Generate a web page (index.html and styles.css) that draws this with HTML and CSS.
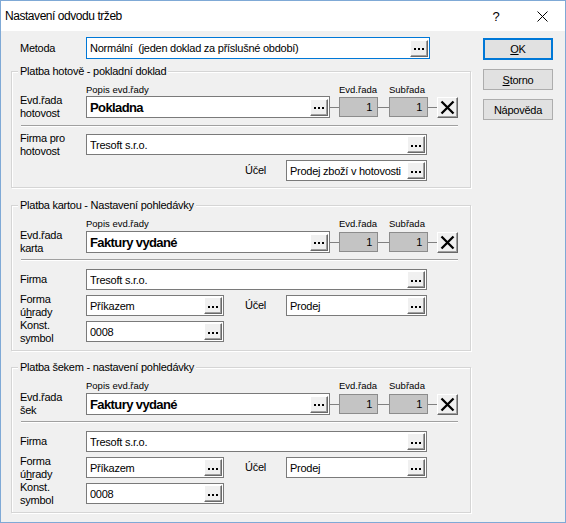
FILE: index.html
```html
<!DOCTYPE html>
<html lang="cs">
<head>
<meta charset="utf-8">
<title>Nastavení odvodu tržeb</title>
<link rel="stylesheet" href="styles.css">
</head>
<body>
<div class="window">
  <div class="titlebar">
    <span class="title">Nastavení odvodu tržeb</span>
    <span class="tb-btn help">?</span>
    <span class="tb-btn"><svg width="11" height="11" viewBox="0 0 11 11"><path d="M0.5 0.5 L10.5 10.5 M10.5 0.5 L0.5 10.5" stroke="#000" stroke-width="1" fill="none"/></svg></span>
  </div>
  <div class="client">
    <div class="main">
      <div class="row metoda-row">
        <span class="lbl">Metoda</span>
        <div class="edit focus w-metoda"><span class="val">Normální  (jeden doklad za příslušné období)</span><span class="ell"><i></i></span></div>
      </div>

      <div class="group g1">
        <div class="legend">Platba hotově - pokladní doklad</div>
        <div class="caprow"><span class="cap c-popis">Popis evd.řady</span><span class="cap c-evd">Evd.řada</span><span class="cap">Subřada</span></div>
        <div class="row evdrow">
          <span class="lbl">Evd.řada<br>hotovost</span>
          <div class="edit w-evd bold"><span class="val">Pokladna</span><span class="ell"><i></i></span></div>
          <span class="link"></span>
          <div class="num">1</div>
          <span class="link l2"></span>
          <div class="num">1</div>
          <span class="link"></span>
          <div class="xbtn"><svg width="15" height="15" viewBox="0 0 15 15"><path d="M1.5 1.5 L13.5 13.5 M13.5 1.5 L1.5 13.5" stroke="#000" stroke-width="2.3" fill="none"/></svg></div>
        </div>
        <div class="sep"></div>
        <div class="row frow r-firma">
          <span class="lbl">Firma pro<br>hotovost</span>
          <div class="edit w-wide"><span class="val">Tresoft s.r.o.</span><span class="ell"><i></i></span></div>
        </div>
        <div class="row frow r-next">
          <span class="lbl ucel solo">Účel</span>
          <div class="edit w-ucel"><span class="val">Prodej zboží v hotovosti</span><span class="ell"><i></i></span></div>
        </div>
      </div>

      <div class="group g2">
        <div class="legend">Platba kartou - Nastavení pohledávky</div>
        <div class="caprow"><span class="cap c-popis">Popis evd.řady</span><span class="cap c-evd">Evd.řada</span><span class="cap">Subřada</span></div>
        <div class="row evdrow">
          <span class="lbl">Evd.řada<br>karta</span>
          <div class="edit w-evd bold"><span class="val">Faktury vydané</span><span class="ell"><i></i></span></div>
          <span class="link"></span>
          <div class="num">1</div>
          <span class="link l2"></span>
          <div class="num">1</div>
          <span class="link"></span>
          <div class="xbtn"><svg width="15" height="15" viewBox="0 0 15 15"><path d="M1.5 1.5 L13.5 13.5 M13.5 1.5 L1.5 13.5" stroke="#000" stroke-width="2.3" fill="none"/></svg></div>
        </div>
        <div class="sep"></div>
        <div class="row frow r-firma">
          <span class="lbl">Firma</span>
          <div class="edit w-wide"><span class="val">Tresoft s.r.o.</span><span class="ell"><i></i></span></div>
        </div>
        <div class="row frow r-next">
          <span class="lbl">Forma<br>ú<u>h</u>rady</span>
          <div class="edit w-short"><span class="val">Příkazem</span><span class="ell"><i></i></span></div>
          <span class="lbl ucel">Účel</span>
          <div class="edit w-ucel"><span class="val">Prodej</span><span class="ell"><i></i></span></div>
        </div>
        <div class="row frow r-next">
          <span class="lbl">Konst.<br>symbol</span>
          <div class="edit w-short"><span class="val">0008</span><span class="ell"><i></i></span></div>
        </div>
      </div>

      <div class="group g3">
        <div class="legend">Platba šekem - nastavení pohledávky</div>
        <div class="caprow"><span class="cap c-popis">Popis evd.řady</span><span class="cap c-evd">Evd.řada</span><span class="cap">Subřada</span></div>
        <div class="row evdrow">
          <span class="lbl">Evd.řada<br>šek</span>
          <div class="edit w-evd bold"><span class="val">Faktury vydané</span><span class="ell"><i></i></span></div>
          <span class="link"></span>
          <div class="num">1</div>
          <span class="link l2"></span>
          <div class="num">1</div>
          <span class="link"></span>
          <div class="xbtn"><svg width="15" height="15" viewBox="0 0 15 15"><path d="M1.5 1.5 L13.5 13.5 M13.5 1.5 L1.5 13.5" stroke="#000" stroke-width="2.3" fill="none"/></svg></div>
        </div>
        <div class="sep"></div>
        <div class="row frow r-firma">
          <span class="lbl">Firma</span>
          <div class="edit w-wide"><span class="val">Tresoft s.r.o.</span><span class="ell"><i></i></span></div>
        </div>
        <div class="row frow r-next">
          <span class="lbl">Forma<br>ú<u>h</u>rady</span>
          <div class="edit w-short"><span class="val">Příkazem</span><span class="ell"><i></i></span></div>
          <span class="lbl ucel">Účel</span>
          <div class="edit w-ucel"><span class="val">Prodej</span><span class="ell"><i></i></span></div>
        </div>
        <div class="row frow r-next">
          <span class="lbl">Konst.<br>symbol</span>
          <div class="edit w-short"><span class="val">0008</span><span class="ell"><i></i></span></div>
        </div>
      </div>
    </div>

    <div class="buttons">
      <div class="btn default"><u>O</u>K</div>
      <div class="btn"><u>S</u>torno</div>
      <div class="btn">Nápověda</div>
    </div>
  </div>
</div>
</body>
</html>
```

FILE: styles.css
```css
* { box-sizing: border-box; }
html, body { margin: 0; padding: 0; }
body {
  background: #ffffff;
  font-family: "Liberation Sans", Arial, sans-serif;
  font-size: 11px;
  letter-spacing: -0.25px;
  color: #000;
}
.window {
  width: 566px;
  height: 523px;
  border: 1px solid #7fa9d6;
  background: #f0f0f0;
  display: flex;
  flex-direction: column;
}
.titlebar {
  height: 30px;
  flex-shrink: 0;
  background: #fff;
  display: flex;
  align-items: center;
}
.title {
  flex: 1;
  font-size: 12px;
  letter-spacing: -0.45px;
  padding-left: 4px;
}
.tb-btn {
  width: 46px;
  height: 30px;
  display: flex;
  align-items: center;
  justify-content: center;
}
.help { font-size: 13px; }

.client {
  flex: 1;
  display: flex;
  align-items: flex-start;
  padding-top: 6px;
}
.main {
  margin-left: 10px;
  width: 460px;
  display: flex;
  flex-direction: column;
}
.buttons {
  margin-left: 12px;
  padding-top: 1px;
  display: flex;
  flex-direction: column;
  gap: 9px;
}
.btn {
  width: 70px;
  height: 21px;
  background: #e1e1e1;
  border: 1px solid #adadad;
  display: flex;
  align-items: center;
  justify-content: center;
}
.btn.default {
  height: 22px;
  border-color: #0078d7;
  box-shadow: inset 0 0 0 1px #0078d7;
}

.row { display: flex; align-items: center; }
.lbl {
  width: 66px;
  flex-shrink: 0;
  line-height: 13px;
}
.metoda-row { height: 22px; }
.metoda-row .lbl { width: 75px; padding-left: 9px; }

.edit {
  height: 21px;
  background: #fff;
  border: 1px solid #7a7a7a;
  display: flex;
  align-items: center;
  padding-left: 3px;
  flex-shrink: 0;
}
.edit .val { flex: 1; white-space: pre; overflow: hidden; }
.edit.focus { border-color: #0078d7; height: 22px; }
.edit.bold { height: 22px; }
.edit.bold .val { font-weight: bold; font-size: 13px; letter-spacing: -0.6px; }
.w-metoda { width: 344px; }
.w-wide { width: 341px; }
.w-evd { width: 244px; }
.w-short { width: 138px; }
.w-ucel { width: 141px; }

.ell {
  width: 18px;
  height: 17px;
  margin-right: 1px;
  flex-shrink: 0;
  background: #f0f0f0;
  border-style: solid;
  border-width: 1px;
  border-color: #fff #696969 #696969 #fff;
  box-shadow: inset -1px -1px 0 #a0a0a0;
  display: flex;
  align-items: center;
  justify-content: center;
}
.ell i {
  display: block;
  width: 2px;
  height: 2px;
  margin-top: 2px;
  background: #000;
  box-shadow: -4px 0 #000, 4px 0 #000;
}

.group {
  border: 1px solid #d5d5d5;
  box-shadow: inset 1px 1px 0 #fff, 1px 1px 0 #fff;
  padding: 0 0 6px 8px;
}
.g1 { margin-top: 12px; }
.g2 { margin-top: 17px; padding-bottom: 8px; }
.g3 { margin-top: 16px; padding-bottom: 8px; }
.legend {
  width: max-content;
  margin-top: -7px;
  margin-left: -2px;
  padding: 0 2px;
  height: 13px;
  line-height: 13px;
  background: #f0f0f0;
}
.caprow {
  display: flex;
  align-items: center;
  height: 12px;
  margin-top: 5px;
  padding-left: 66px;
  font-size: 9.5px;
  letter-spacing: 0;
}
.c-popis { width: 253px; }
.c-evd { width: 50px; }
.evdrow { height: 22px; margin-top: 1px; }
.g2 .evdrow, .g3 .evdrow { margin-top: 2px; }
.link { width: 9px; height: 1px; background: #808080; flex-shrink: 0; }
.link.l2 { width: 11px; }
.num {
  width: 39px;
  height: 20px;
  flex-shrink: 0;
  background: #c4c4c4;
  border: 1px solid #8c8c8c;
  text-align: right;
  padding-right: 5px;
  line-height: 18px;
}
.xbtn {
  width: 21px;
  height: 21px;
  flex-shrink: 0;
  background: #f0f0f0;
  border-style: solid;
  border-width: 1px;
  border-color: #fff #696969 #696969 #fff;
  box-shadow: inset -1px -1px 0 #a0a0a0;
  display: flex;
  align-items: center;
  justify-content: center;
}
.sep {
  height: 2px;
  border-top: 1px solid #a0a0a0;
  border-bottom: 1px solid #fff;
  margin: 7px 12px 0 1px;
}
.g2 .sep, .g3 .sep { margin-top: 6px; }
.frow { height: 21px; }
.r-firma { margin-top: 7px; }
.g2 .r-firma, .g3 .r-firma { margin-top: 8px; }
.r-next { margin-top: 5px; }
.lbl.ucel { width: 41px; margin-left: 21px; }
.lbl.ucel.solo { margin-left: 225px; }
```
